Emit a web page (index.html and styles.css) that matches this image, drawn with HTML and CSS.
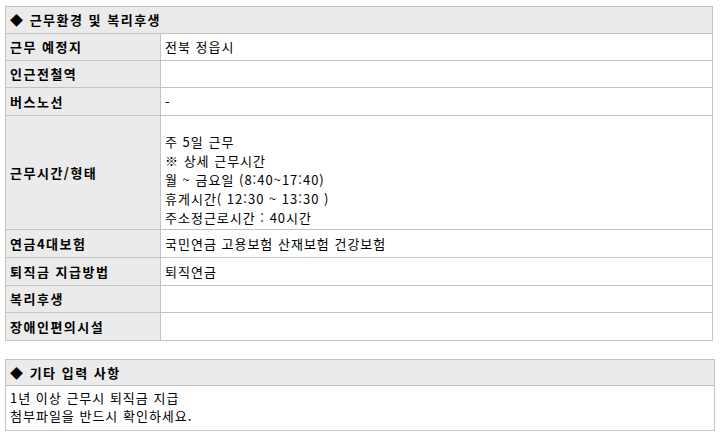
FILE: index.html
```html
<!DOCTYPE html>
<html lang="ko">
<head>
<meta charset="utf-8">
<link rel="stylesheet" href="styles.css">
</head>
<body>
<div class="page">
  <table class="info">
    <colgroup><col class="col-label"><col class="col-value"></colgroup>
    <tr class="r27"><th class="head" colspan="2">◆ 근무환경 및 복리후생</th></tr>
    <tr class="r27"><th class="label">근무 예정지</th><td class="value">전북 정읍시</td></tr>
    <tr class="r27"><th class="label">인근전철역</th><td class="value"></td></tr>
    <tr class="r28"><th class="label">버스노선</th><td class="value">-</td></tr>
    <tr class="tall"><th class="label">근무시간/형태</th><td class="value multi">주 5일 근무<br>※ 상세 근무시간<br>월 ~ 금요일 (8:40~17:40)<br>휴게시간( 12:30 ~ 13:30 )<br>주소정근로시간 : 40시간</td></tr>
    <tr class="r28"><th class="label">연금4대보험</th><td class="value">국민연금 고용보험 산재보험 건강보험</td></tr>
    <tr class="r28"><th class="label">퇴직금 지급방법</th><td class="value">퇴직연금</td></tr>
    <tr class="r27"><th class="label">복리후생</th><td class="value"></td></tr>
    <tr class="r28"><th class="label">장애인편의시설</th><td class="value"></td></tr>
  </table>

  <table class="info other">
    <tr class="r26"><th class="head">◆ 기타 입력 사항</th></tr>
    <tr class="r45"><td class="value note">1년 이상 근무시 퇴직금 지급<br>첨부파일을 반드시 확인하세요.</td></tr>
  </table>
</div>
</body>
</html>
```

FILE: styles.css
```css
html, body {
  margin: 0;
  padding: 0;
  background: #ffffff;
}
body {
  font-family: "Noto Sans CJK KR", "Noto Sans", sans-serif;
  font-size: 13px;
  letter-spacing: 1px;
  color: #000;
}
.page {
  padding: 6px 0 0 5px;
}
.info {
  border-collapse: collapse;
  width: 708px;
  table-layout: fixed;
}
.col-label {
  width: 155px;
}
.info th, .info td {
  border: 1px solid #c3c3c3;
  padding: 0 4px;
  line-height: 16px;
  text-align: left;
  vertical-align: middle;
  font-weight: normal;
}
.r26 { height: 26px; }
.r27 { height: 27px; }
.r28 { height: 28px; }
.r45 { height: 45px; }
.tall { height: 114px; }
.info .head {
  background: #ebebeb;
  font-weight: bold;
  letter-spacing: 1.5px;
}
.info .label {
  background: #ebebeb;
  font-weight: bold;
  letter-spacing: 1.5px;
}
.info .value {
  background: #fff;
}
.info .multi {
  line-height: 19px;
  vertical-align: top;
  padding-top: 16px;
}
.other {
  width: 710px;
  margin-top: 18px;
}
.other .head {
  padding-top: 1px;
}
.other .note {
  line-height: 18px;
  vertical-align: top;
  padding-top: 3px;
}
```
